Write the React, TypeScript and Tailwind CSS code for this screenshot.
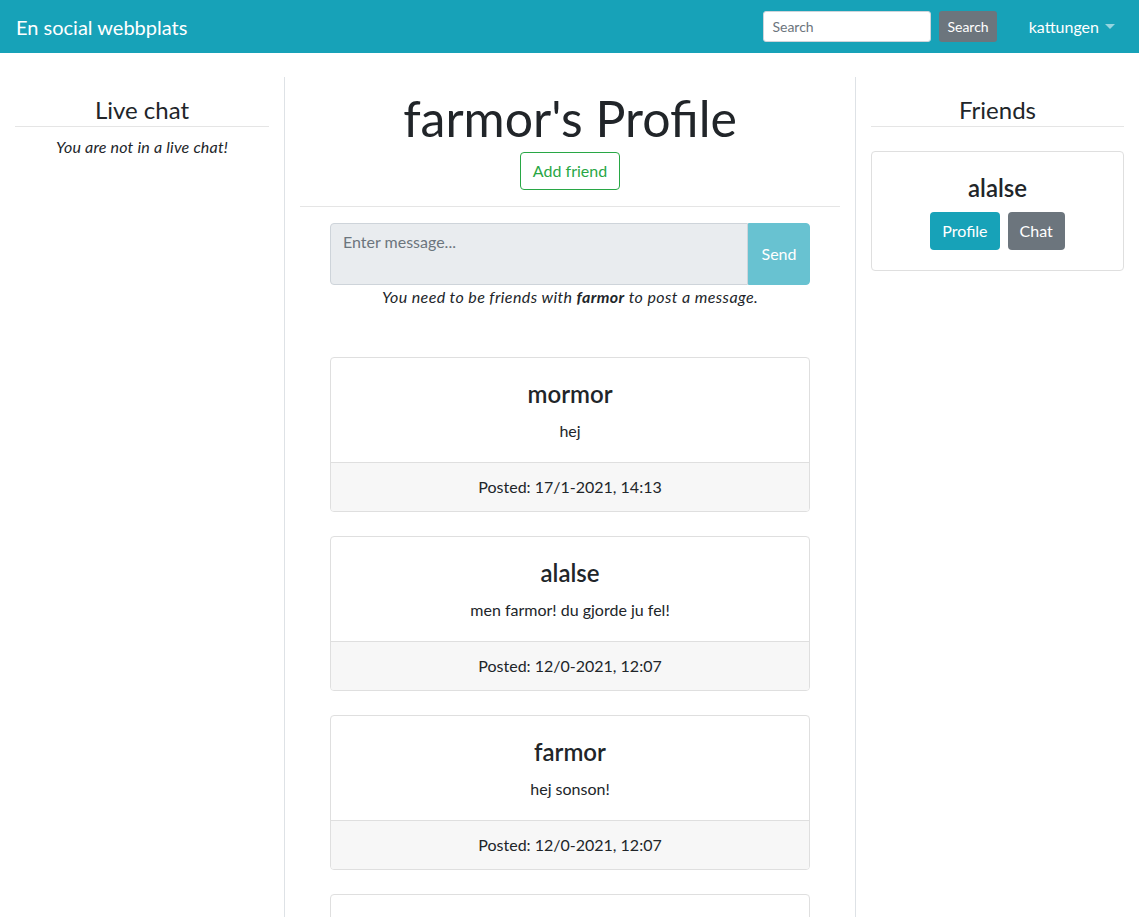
const posts = [
  { author: "mormor", text: "hej", posted: "17/1-2021, 14:13" },
  { author: "alalse", text: "men farmor! du gjorde ju fel!", posted: "12/0-2021, 12:07" },
  { author: "farmor", text: "hej sonson!", posted: "12/0-2021, 12:07" },
  { author: "farmor", text: "hej", posted: "12/0-2021, 12:07" },
];

const PostCard = ({ author, text, posted }: { author: string; text: string; posted: string }) => (
  <div className="mb-6 overflow-hidden rounded border border-[#dfdfdf] bg-white">
    <div className="px-5 pt-[22px] pb-[19px] text-center">
      <h4 className="mb-[11px] text-[24px] leading-[28px] font-semibold">{author}</h4>
      <p className="text-[16px] leading-6">{text}</p>
    </div>
    <div className="border-t border-[#dfdfdf] bg-[#f7f7f7] px-5 py-3 text-center text-[16px] leading-6">
      Posted: {posted}
    </div>
  </div>
);

export default function App() {
  return (
    <div className="h-[917px] overflow-hidden bg-white text-[#212529] [font-family:Lato,'Noto_Sans',sans-serif]">
      <nav className="flex h-[53px] items-center bg-[#17a2b8] pr-6 pl-4">
        <a className="text-[20px] leading-[30px] text-white">En social webbplats</a>
        <div className="ml-auto flex items-center">
          <input
            placeholder="Search"
            className="h-[31px] w-[168px] rounded-[3px] border border-[#ced4da] bg-white px-2 text-[14px] placeholder:text-[#6c757d]"
          />
          <button className="ml-2 h-[31px] rounded-[3px] bg-[#6c757d] px-2 text-[14px] text-white">Search</button>
          <div className="ml-8 flex items-center gap-1 text-[16px] text-white">
            kattungen
            <svg width="10" height="6" viewBox="0 0 10 6" className="ml-0.5">
              <path d="M0 0h10L5 5z" fill="rgba(255,255,255,0.55)" />
            </svg>
          </div>
        </div>
      </nav>

      <div className="mt-6 grid grid-cols-[285px_571px_1fr]">
        <div className="border-r border-[#dee2e6] px-[15px] pt-[18px]">
          <h4 className="border-b border-[#e5e5e5] pb-0.5 text-center text-[24px] leading-[29px] font-normal">Live chat</h4>
          <p className="mt-2 text-center text-[16px] leading-6 tracking-[0.2px] italic">You are not in a live chat!</p>
        </div>

        <div className="min-h-[840px] border-r border-[#dee2e6] px-[15px] pt-3">
          <div className="border-b border-[#e5e5e5] pb-4 text-center">
            <h1 className="text-[50px] leading-[58px] font-normal">farmor's Profile</h1>
            <button className="mt-[5px] h-[38px] rounded border border-[#28a745] px-3 text-[16px] text-[#28a745]">
              Add friend
            </button>
          </div>
          <div className="px-[30px] pt-4">
            <div className="flex h-[62px]">
              <textarea
                disabled
                placeholder="Enter message..."
                className="flex-1 resize-none rounded-l border border-[#ced4da] bg-[#e9ecef] px-3 py-1.5 text-[16px] leading-6 placeholder:text-[#6c757d]"
              />
              <button className="w-[62px] rounded-r border border-[#68c2d1] bg-[#68c2d1] text-[16px] text-white">Send</button>
            </div>
            <p className="text-center text-[16px] leading-6 tracking-[0.4px] italic">
              You need to be friends with <b className="font-bold">farmor</b> to post a message.
            </p>
            <div className="mt-12">
              {posts.map((p, i) => (
                <PostCard key={i} {...p} />
              ))}
            </div>
          </div>
        </div>

        <div className="px-[15px] pt-[18px]">
          <h4 className="border-b border-[#e5e5e5] pb-0.5 text-center text-[24px] leading-[29px] font-normal">Friends</h4>
          <div className="mt-6 rounded border border-[#dfdfdf] px-5 pt-[22px] pb-5 text-center">
            <h4 className="mb-2.5 text-[24px] leading-[28px] font-semibold">alalse</h4>
            <div className="flex justify-center gap-2">
              <button className="h-[38px] rounded bg-[#17a2b8] px-3 text-[16px] text-white">Profile</button>
              <button className="h-[38px] rounded bg-[#6c757d] px-3 text-[16px] text-white">Chat</button>
            </div>
          </div>
        </div>
      </div>
    </div>
  );
}
